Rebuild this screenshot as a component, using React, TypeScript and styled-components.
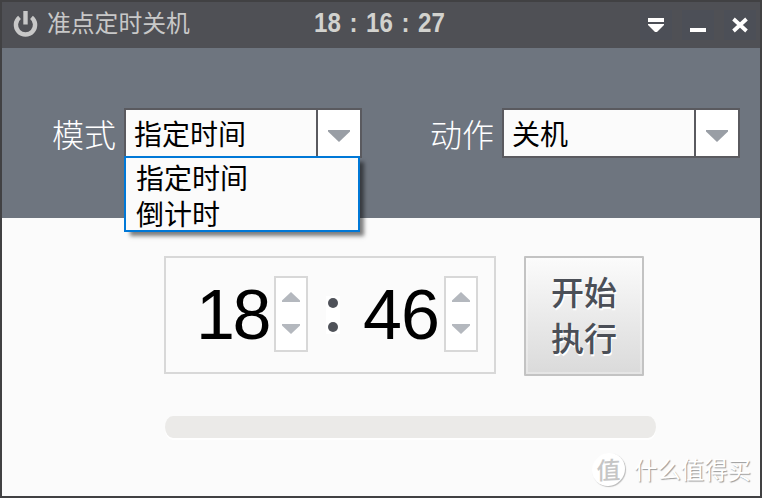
import React from "react";
import styled, { createGlobalStyle } from "styled-components";

const GlobalStyle = createGlobalStyle`
  * { box-sizing: border-box; }
  body { margin: 0; background: #fbfbfb; font-family: "Noto Sans CJK SC", sans-serif; }
`;

const Window = styled.div`
  width: 762px;
  height: 498px;
  border: 2px solid #414143;
  background: #fbfbfb;
  display: flex;
  flex-direction: column;
  overflow: hidden;
`;

const TitleBar = styled.header`
  height: 46px;
  flex: none;
  background: #4f5055;
  display: grid;
  grid-template-columns: 312px 1fr auto;
  align-items: center;
`;

const Brand = styled.div`
  display: flex;
  align-items: center;
  padding: 0 0 2px 11px;
  gap: 9px;
  color: #c8c8c8;
`;

const Title = styled.h1`
  margin: 0;
  padding-bottom: 4px;
  font-size: 23.8px;
  line-height: 36px;
  font-weight: 400;
  white-space: nowrap;
`;

const Clock = styled.time`
  display: flex;
  color: #d2d2ce;
  font: 700 28px/40px "Liberation Sans", Arial, sans-serif;
  padding-bottom: 4px;
`;

const ClockPart = styled.span<{ $colon?: boolean }>`
  width: ${(p) => (p.$colon ? 25 : 27)}px;
  display: flex;
  justify-content: center;
  transform: scaleX(0.86);
`;

const WindowButtons = styled.nav`
  display: flex;
  gap: 10px;
  padding-right: 4px;
`;

const WindowButton = styled.button`
  width: 32px;
  height: 30px;
  padding: 0;
  border: 0;
  background: #4c4f57;
`;

const Options = styled.section`
  height: 170px;
  flex: none;
  background: #6e757f;
  display: flex;
  align-items: flex-start;
  padding: 60px 0 0 50px;
  gap: 68px;
`;

const Field = styled.div`
  display: flex;
  gap: 8px;
`;

const Label = styled.label`
  width: 64px;
  color: #fff;
  font-size: 32px;
  line-height: 50px;
  font-weight: 300;
  white-space: nowrap;
`;

const Select = styled.div`
  position: relative;
  width: 238px;
  height: 50px;
  border: 2px solid #5a5a5f;
  display: flex;
  background: #fbfbfb;
`;

const SelectValue = styled.div`
  flex: 1;
  padding-left: 8px;
  color: #000;
  font-size: 28px;
  line-height: 46px;
`;

const SelectArrow = styled.div`
  width: 44px;
  border-left: 2px solid #5a5a5f;
  background: #fff;
  display: flex;
  align-items: center;
  justify-content: center;
  padding-top: 5px;
`;

const Menu = styled.ul`
  position: absolute;
  left: -2px;
  top: 46px;
  width: 236px;
  height: 76px;
  margin: 0;
  padding: 1px 0 0 10px;
  border: 2px solid #0078d7;
  background: #fbfbfb;
  box-shadow: 5px 5px 4px -1px rgba(0, 0, 0, 0.5);
  list-style: none;
  z-index: 2;
`;

const MenuItem = styled.li`
  height: 36px;
  font-size: 28px;
  line-height: 36px;
  color: #000;
`;

const Body = styled.main`
  flex: 1;
  display: flex;
  flex-direction: column;
`;

const TimeRow = styled.div`
  display: flex;
  gap: 28px;
  padding: 38px 0 0 162px;
`;

const TimeBox = styled.div`
  width: 332px;
  height: 118px;
  border: 2px solid #d8d8d8;
  display: flex;
  align-items: flex-start;
  padding: 18px 0 0 30px;
`;

const Digits = styled.div<{ $width: number; $spacing: number }>`
  width: ${(p) => p.$width}px;
  height: 76px;
  font: 400 70px/79px "Liberation Sans", Arial, sans-serif;
  letter-spacing: ${(p) => p.$spacing}px;
  color: #000;
`;

const Spinner = styled.div`
  width: 34px;
  height: 76px;
  border: 2px solid #d8d8d8;
  background: #fff;
  display: flex;
  flex-direction: column;
  align-items: center;
  justify-content: center;
  gap: 22px;
  padding-bottom: 3px;
`;

const Colon = styled.div`
  width: 14px;
  height: 38px;
  margin: 20px 23px 0 18px;
  background: #fff;
  display: flex;
  flex-direction: column;
  align-items: center;
  justify-content: center;
  gap: 14px;
`;

const Dot = styled.i`
  width: 10px;
  height: 10px;
  border-radius: 50%;
  background: #4f5259;
`;

const StartButton = styled.button`
  width: 120px;
  height: 120px;
  padding: 0 0 4px 0;
  border: 2px solid #c3c3c3;
  box-shadow: inset 0 0 0 2px rgba(255, 255, 255, 0.3);
  border-radius: 1px;
  background: linear-gradient(#fbfbfb, #dadada);
  color: #4b4f57;
  font: 500 33px/46px "Noto Sans CJK SC", sans-serif;
  text-shadow: 1px 2px 0 #fff;
`;

const Progress = styled.div`
  width: 491px;
  height: 22px;
  margin: 40px 0 0 163px;
  border-radius: 8px / 11px;
  background: #ebeae8;
  box-shadow: 0 2px 0 #fff;
`;

const Watermark = styled.footer`
  display: flex;
  align-items: center;
  gap: 9px;
  margin: 15px 0 0 590px;
  color: #fff;
  font-size: 23.4px;
  line-height: 33px;
  white-space: nowrap;
  text-shadow: 1px 1px 1px #999;
`;

const Seal = styled.span`
  width: 33px;
  height: 33px;
  border-radius: 50%;
  background: #fff;
  box-shadow: 1px 1px 1px #bbb;
  color: #c6c6c6;
  font-size: 24px;
  font-weight: 500;
  line-height: 31px;
  text-align: center;
  text-shadow: none;
  transform: skewY(-3deg);
`;

const PowerIcon = () => (
  <svg width="25" height="28" viewBox="0 0 25 28" fill="none" stroke="#c8c8c8">
    <path d="M6.5 7.4A9.6 9.6 0 1 0 18.5 7.4" strokeWidth="4.4" />
    <path d="M12.5 1V14.5" strokeWidth="4.4" />
  </svg>
);

const DownArrow = () => (
  <svg width="22" height="12" viewBox="0 0 22 12">
    <path d="M0 0H22V1.5L11 12L0 1.5Z" fill="#999ea5" />
  </svg>
);

const StepArrow = ({ down }: { down?: boolean }) => (
  <svg width="18" height="10" viewBox="0 0 18 10">
    <path d={down ? "M0 0H18V1.5L9 10L0 1.5Z" : "M0 10H18V8.5L9 0L0 8.5Z"} fill="#b4b8be" />
  </svg>
);

const Stepper = () => (
  <Spinner>
    <StepArrow />
    <StepArrow down />
  </Spinner>
);

export default function App() {
  return (
    <>
      <GlobalStyle />
      <Window>
        <TitleBar>
          <Brand>
            <PowerIcon />
            <Title>准点定时关机</Title>
          </Brand>
          <Clock>
            <ClockPart>18</ClockPart>
            <ClockPart $colon>:</ClockPart>
            <ClockPart>16</ClockPart>
            <ClockPart $colon>:</ClockPart>
            <ClockPart>27</ClockPart>
          </Clock>
          <WindowButtons>
            <WindowButton aria-label="menu">
              <svg width="32" height="30" viewBox="0 0 32 30">
                <path d="M8 8H24V12H8Z" fill="#fff" />
                <path d="M8 14H24V15L17 22H15L8 15Z" fill="#fff" />
              </svg>
            </WindowButton>
            <WindowButton aria-label="minimize">
              <svg width="32" height="30" viewBox="0 0 32 30">
                <path d="M8 18H24V22H8Z" fill="#fff" />
              </svg>
            </WindowButton>
            <WindowButton aria-label="close">
              <svg width="32" height="30" viewBox="0 0 32 30">
                <path d="M9.5 9L22.5 21M22.5 9L9.5 21" stroke="#fff" strokeWidth="3.8" />
              </svg>
            </WindowButton>
          </WindowButtons>
        </TitleBar>
        <Options>
          <Field>
            <Label>模式</Label>
            <Select>
              <SelectValue>指定时间</SelectValue>
              <SelectArrow><DownArrow /></SelectArrow>
              <Menu>
                <MenuItem>指定时间</MenuItem>
                <MenuItem>倒计时</MenuItem>
              </Menu>
            </Select>
          </Field>
          <Field>
            <Label>动作</Label>
            <Select>
              <SelectValue>关机</SelectValue>
              <SelectArrow><DownArrow /></SelectArrow>
            </Select>
          </Field>
        </Options>
        <Body>
          <TimeRow>
            <TimeBox>
              <Digits $width={78} $spacing={-2.5}>18</Digits>
              <Stepper />
              <Colon><Dot /><Dot /></Colon>
              <Digits $width={81} $spacing={-1}>46</Digits>
              <Stepper />
            </TimeBox>
            <StartButton>开始<br />执行</StartButton>
          </TimeRow>
          <Progress />
          <Watermark>
            <Seal>值</Seal>
            什么值得买
          </Watermark>
        </Body>
      </Window>
    </>
  );
}
